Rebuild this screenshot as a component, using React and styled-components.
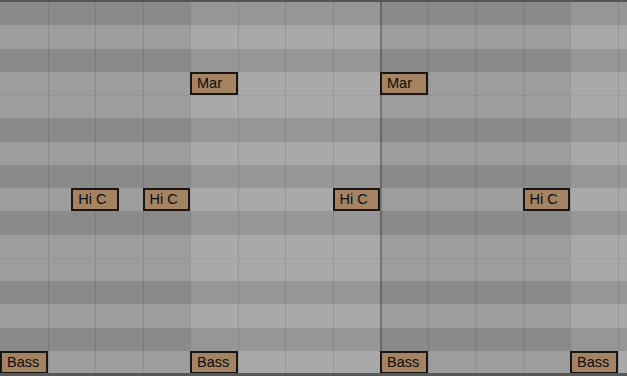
import styled, { createGlobalStyle } from "styled-components";

const COL = 47.5;
const ROW = 23.25;
const COLS = 14;
// 16 pitch rows from top: true = black key (darker lane)
const BLACK = [1, 0, 1, 0, 0, 1, 0, 1, 0, 1, 0, 0, 1, 0, 1, 0];

const NOTES = [
  { name: "Mar", row: 3, col: 4 },
  { name: "Mar", row: 3, col: 8 },
  { name: "Hi C", row: 8, col: 1.5 },
  { name: "Hi C", row: 8, col: 3 },
  { name: "Hi C", row: 8, col: 7 },
  { name: "Hi C", row: 8, col: 11 },
  { name: "Bass", row: 15, col: 0 },
  { name: "Bass", row: 15, col: 4 },
  { name: "Bass", row: 15, col: 8 },
  { name: "Bass", row: 15, col: 12 },
];

const GlobalStyle = createGlobalStyle`
  html, body {
    margin: 0;
    padding: 0;
    background: #545454;
    overflow: hidden;
  }
`;

// 셀 색상
const cellColor = (black, lightBeat) => {
  if (lightBeat) return black ? "#969696" : "#a9a9a9";
  return black ? "#8a8a8a" : "#9d9d9d";
};

const App = () => {
  return (
    <>
      <GlobalStyle />
      <Editor>
        <Canvas>
          {BLACK.map((black, r) => (
            <Lane key={r} $split={r > 0 && !black && !BLACK[r - 1]}>
              {Array.from({ length: COLS }).map((_, c) => (
                <Cell
                  key={c}
                  $bg={cellColor(black, Math.floor(c / 4) % 2 === 1)}
                  $bar={c % 8 === 0 && c > 0}
                />
              ))}
            </Lane>
          ))}

          {NOTES.map((n, i) => (
            <Note
              key={i}
              style={{ left: n.col * COL, top: n.row * ROW }}
            >
              {n.name}
            </Note>
          ))}
        </Canvas>
      </Editor>
    </>
  );
};
export default App;

// 에디터 전체
const Editor = styled.div`
  width: 627px;
  height: 376px;
  box-sizing: border-box;
  border-top: 2px solid #555555;
  border-bottom: 3px solid #585858;
  overflow: hidden;
  font-family: "Liberation Sans", Arial, sans-serif;
`;

// 그리드 캔버스
const Canvas = styled.div`
  position: relative;
  height: 100%;
  display: flex;
  flex-direction: column;
`;

// 피치 레인 (흰 건반 두 개가 붙는 곳에 옅은 구분선)
const Lane = styled.div`
  display: flex;
  height: ${ROW}px;
  flex-shrink: 0;
  box-shadow: ${(p) => (p.$split ? "inset 0 1px 0 rgba(0, 0, 0, 0.06)" : "none")};
  position: relative;

  & > div {
    box-shadow: ${(p) => (p.$split ? "inset 0 1px 0 rgba(0, 0, 0, 0.06)" : "none")};
  }
`;

// 16분음표 셀
const Cell = styled.div`
  width: ${COL}px;
  flex-shrink: 0;
  box-sizing: border-box;
  background: ${(p) => p.$bg};
  border-left: ${(p) =>
    p.$bar ? "2px solid rgba(0, 0, 0, 0.25)" : "1px solid rgba(0, 0, 0, 0.1)"};
  &:first-child {
    border-left: none;
  }
`;

// 노트
const Note = styled.div`
  position: absolute;
  width: ${COL}px;
  height: ${ROW}px;
  box-sizing: border-box;
  padding-left: 5px;
  background: #a38361;
  border: 2px solid #181614;
  color: #0c0c0c;
  font-size: 14.5px;
  line-height: 19px;
  white-space: nowrap;
  overflow: hidden;
`;
